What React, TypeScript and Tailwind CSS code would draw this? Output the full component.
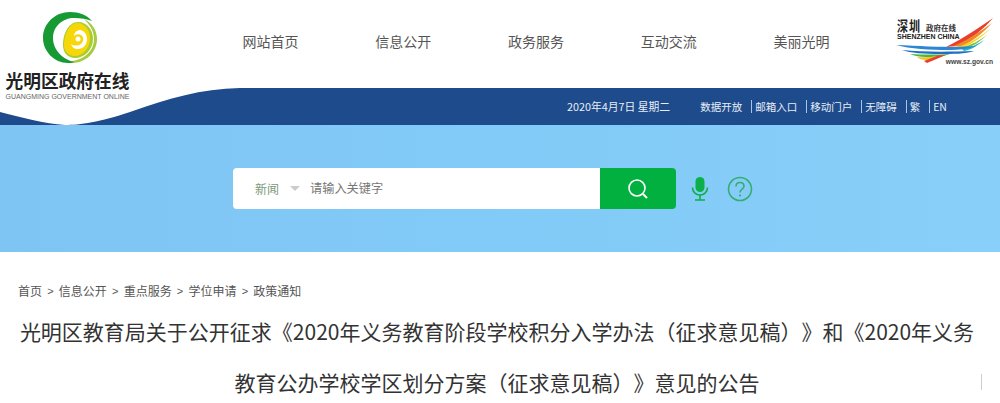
import React from "react";

const font = { fontFamily: '"Noto Sans CJK SC", "Noto Sans", sans-serif' };
const nav = ["网站首页", "信息公开", "政务服务", "互动交流", "美丽光明"];
const links = ["邮箱入口", "移动门户", "无障碍", "繁", "EN"];
const crumbs = ["首页", "信息公开", "重点服务", "学位申请", "政策通知"];

function GmLogo() {
  return (
    <svg width="54" height="52" viewBox="0 0 54 52" className="block">
      <path d="M41 7C49 11 54 18 54 27 54 40 43 51 29 51 26 51 24 50.500 22 50 33 50 51 44 51 27 51 18 46 12 41 7Z" fill="#a6cb3c" />
      <path d="M49 9C44 3 36 0 27 0 12 0 0 11.500 0 26 0 39 11 51 25 51 28 51 30 50.500 32 50 20 48 10 38 10 26 10 14 20 6 31 6 38 6 44 7 49 9Z" fill="#179a34" />
      <path d="M35 10C44 10 50 18 50 27 50 38 41 46 32 46 25 46 20 41 20 33 20 21 26 10 35 10Z" fill="#a8cc2e" />
      <path d="M34 11C42 11 47 18 47 26 47 37 39 44 32 44 25 44 21 39 21 33 21 22 27 11 34 11Z" fill="#f6d80a" />
      <path d="M37 18C42 19 44 23 44 27 44 33 40 37 35 37 31 37 29 35 28 32 31 34 35 34 38 32 41 29 41 25 38 23 36 21.500 33 22 31 24 31 21 33 18.500 37 18Z" fill="#ffffff" />
      <circle cx="35" cy="27" r="2.500" fill="#ffffff" />
    </svg>
  );
}

function SzWings() {
  return (
    <svg width="100" height="50" viewBox="0 0 100 50" className="block">
      <path d="M50 31C68 22 84 11 97 2 88 13 76 22 62 30Z" fill="#e8402c" />
      <path d="M58 30C72 24 85 15 96 7 88 16 77 25 65 31Z" fill="#f08a24" />
      <path d="M62 31C74 27 85 20 94 13 86 21 76 28 67 32Z" fill="#f4d22a" />
      <path d="M65 32C75 29 85 24 92 18 85 25 76 31 69 33Z" fill="#7cc243" />
      <path d="M66 33C74 32 82 28 88 24 82 30 74 34 68 35Z" fill="#27b4c4" />
      <path d="M0 29C22 30 44 31 60 31L80 30C72 33 62 34 54 34 34 34 14 33 0 29Z" fill="#2b86d6" />
      <path d="M6 34C26 36 50 36 78 35 70 38 56 38 44 38 28 38 14 37 6 34Z" fill="#1f6fc4" />
      <path d="M14 38C26 38.500 38 39 54 38 46 41 36 41 30 41 24 41 18 40 14 38Z" fill="#49b54a" />
      <path d="M21 41C28 41.500 38 41 46 40 40 43 34 44 30 44 26 44 23 43 21 41Z" fill="#f4c51e" />
      <path d="M31 47L50 39 42 39.500 28 45Z" fill="#e8402c" />
    </svg>
  );
}

export default function App() {
  return (
    <div className="relative w-[1000px] h-[403px] overflow-hidden bg-white" style={font}>
      <div className="relative">
        <div className="absolute left-[5px] top-[12px] z-10 w-[125px] flex flex-col items-center">
          <div className="self-start ml-[38px]"><GmLogo /></div>
          <div className="mt-[4px] text-[17.7px] leading-[24px] font-bold text-[#222] whitespace-nowrap">光明区政府在线</div>
          <div className="mt-[1px] text-[7px] leading-[8px] text-[#666] whitespace-nowrap font-['Liberation_Sans']">GUANGMING GOVERNMENT ONLINE</div>
        </div>

        <div className="h-[88px] flex items-center">
          <div className="ml-[204px] w-[664px] grid grid-cols-5 -mt-[6px]">
            {nav.map((n) => (
              <div key={n} className="text-center text-[14px] text-[#555]">{n}</div>
            ))}
          </div>
          <div className="ml-[28px] relative w-[100px] h-[50px] -mt-[6px]">
            <div className="absolute left-0 top-0"><SzWings /></div>
            <div className="absolute left-[1px] top-[2px] text-[11px] leading-[11px] font-bold text-[#222] tracking-[1px] origin-top scale-y-125">深圳</div>
            <div className="absolute left-[30px] top-[8px] text-[7.5px] leading-[8px] font-bold text-[#333] whitespace-nowrap">政府在线</div>
            <div className="absolute left-[1px] top-[17px] text-[7px] leading-[8px] text-[#222] whitespace-nowrap font-['Liberation_Sans'] font-bold">SHENZHEN CHINA</div>
            <div className="absolute right-[3px] top-[42px] text-[6.7px] leading-[8px] font-bold text-[#444] whitespace-nowrap font-['Liberation_Sans']">www.sz.gov.cn</div>
          </div>
        </div>

        <div className="relative h-[37px] bg-[#1d4b8c] flex items-center text-white text-[10.5px]">
          <svg className="absolute left-0 top-0" width="240" height="37" viewBox="0 0 240 37" preserveAspectRatio="none">
            <path d="M0 0H240C200 1 170 10 130 24 100 34 80 37 65 37 45 36 20 29 0 24Z" fill="#ffffff" />
          </svg>
          <div className="ml-[567px] whitespace-nowrap text-[10.8px] text-[#e8eef6]">2020年4月7日 星期二</div>
          <div className="ml-[30px] whitespace-nowrap text-[#e8eef6]">数据开放</div>
          {links.map((l) => (
            <React.Fragment key={l}>
              <span className="ml-[9px] mr-[3px] w-px h-[13px] bg-[#a9c4e6]" />
              <span className="whitespace-nowrap text-[#e8eef6]">{l}</span>
            </React.Fragment>
          ))}
        </div>
      </div>

      <div className="h-[127px] bg-gradient-to-r from-[#7fc5f4] via-[#82caf7] to-[#88d0f9] flex items-start">
        <div className="ml-[233px] mt-[43px] flex items-center">
          <div className="w-[367px] h-[41px] bg-white rounded-l-[4px] flex items-center text-[12px]">
            <span className="ml-[22px] text-[#7c9a7c]">新闻</span>
            <span className="ml-[11px] w-0 h-0 border-x-[5px] border-x-transparent border-t-[5px] border-t-[#ccc]" />
            <span className="ml-[10px] text-[12.2px] text-[#777]">请输入关键字</span>
          </div>
          <div className="w-[76px] h-[41px] bg-[#02b040] rounded-r-[4px] flex items-center justify-center">
            <svg width="22" height="22" viewBox="0 0 22 22" fill="none" stroke="#fff" strokeWidth="1.6">
              <circle cx="10" cy="10" r="8" />
              <path d="M16 16l4 4" strokeWidth="2" />
            </svg>
          </div>
          <svg className="ml-[15px]" width="18" height="24" viewBox="0 0 18 24" fill="none">
            <rect x="4.500" y="0" width="9" height="15" rx="4.500" fill="#0cb04a" />
            <path d="M1.500 10.500c0 4.500 3.300 7.500 7.500 7.500s7.500-3 7.500-7.500" stroke="#0cb04a" strokeWidth="1.600" />
            <path d="M9 18v5M4 23h10" stroke="#0cb04a" strokeWidth="1.600" />
          </svg>
          <svg className="ml-[18px]" width="26" height="26" viewBox="0 0 26 26" fill="none">
            <circle cx="13" cy="13" r="11.500" stroke="#35ad72" strokeWidth="1.600" />
            <path d="M9 10.500c0-2.500 1.800-4 4-4s4 1.500 4 3.700c0 3-4 3-4 6.300" stroke="#35ad72" strokeWidth="1.600" />
            <circle cx="13" cy="19.500" r="1.100" fill="#35ad72" />
          </svg>
        </div>
      </div>

      <div className="pt-[30px] pl-[18px] flex items-center text-[12px] leading-[18px] text-[#555]">
        {crumbs.map((c, i) => (
          <React.Fragment key={c}>
            {i > 0 && <span className="mx-[5.2px] font-['Liberation_Sans'] text-[11px]">&gt;</span>}
            <span>{c}</span>
          </React.Fragment>
        ))}
      </div>
      <div className="mt-[6px] pr-[6px] text-center text-[21px] leading-[51px] text-[#333] whitespace-nowrap [text-spacing-trim:space-all]">
        <div>光明区教育局关于公开征求《2020年义务教育阶段学校积分入学办法（征求意见稿）》和《2020年义务</div>
        <div>教育公办学校学区划分方案（征求意见稿）》意见的公告</div>
      </div>
      <div className="absolute left-[981px] top-[374px] w-px h-[16px] bg-[#ccc]" />
    </div>
  );
}
